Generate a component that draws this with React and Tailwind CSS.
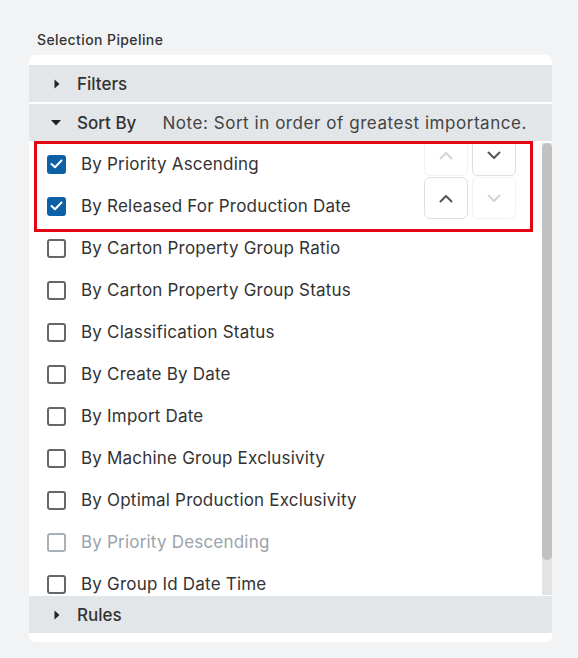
import React from "react";

const items = [
  { label: "By Priority Ascending", checked: true },
  { label: "By Released For Production Date", checked: true },
  { label: "By Carton Property Group Ratio" },
  { label: "By Carton Property Group Status" },
  { label: "By Classification Status" },
  { label: "By Create By Date" },
  { label: "By Import Date" },
  { label: "By Machine Group Exclusivity" },
  { label: "By Optimal Production Exclusivity" },
  { label: "By Priority Descending", disabled: true },
  { label: "By Group Id Date Time" },
];

const Caret = ({ open }) =>
  open ? (
    <svg width="10" height="6" viewBox="0 0 10 6" className="mr-[16px] ml-[22px]">
      <path d="M0 0 L10 0 L5 5.5 Z" fill="#222" />
    </svg>
  ) : (
    <svg width="6" height="10" viewBox="0 0 6 10" className="mr-[17px] ml-[25px]">
      <path d="M0.5 0.5 L5.5 5 L0.5 9.5 Z" fill="#222" />
    </svg>
  );

const Chevron = ({ up, active }) => (
  <svg width="14" height="9" viewBox="0 0 14 9">
    <path
      d={up ? "M1.5 7.5 L7 2 L12.5 7.5" : "M1.5 1.5 L7 7 L12.5 1.5"}
      fill="none"
      stroke={active ? "#555" : "#d4d4d4"}
      strokeWidth="2"
      strokeLinecap="round"
      strokeLinejoin="round"
    />
  </svg>
);

const ArrowButton = ({ up, active }) => (
  <div
    className={
      "w-[44px] h-[42px] rounded-[6px] border flex items-center justify-center bg-white " +
      (active ? "border-[#dcdfe3]" : "border-[#f1f2f3]")
    }
  >
    <Chevron up={up} active={active} />
  </div>
);

const Checkbox = ({ checked, disabled }) =>
  checked ? (
    <div className="w-[19px] h-[19px] shrink-0 rounded-[3px] bg-[#0d5fa6] flex items-center justify-center">
      <svg width="13" height="10" viewBox="0 0 13 10">
        <path d="M1.5 5 L5 8.3 L11.5 1.5" fill="none" stroke="#fff" strokeWidth="2" strokeLinecap="round" strokeLinejoin="round" />
      </svg>
    </div>
  ) : (
    <div
      className={
        "w-[19px] h-[19px] shrink-0 rounded-[3px] border-2 " +
        (disabled ? "border-[#a8b0b8]" : "border-[#666]")
      }
    />
  );

export default function App() {
  return (
    <div
      className="w-[578px] h-[658px] bg-[#f2f3f5] pt-[31px] pl-[29px]"
      style={{ fontFamily: "Inter, 'Noto Sans', sans-serif" }}
    >
      <div className="text-[14px] tracking-[0.4px] font-medium text-[#333] ml-[8px] leading-[18px]">
        Selection Pipeline
      </div>
      <div className="mt-[6px] w-[523px] bg-white rounded-[6px] pt-[10px] pb-[9px]">
        <div className="h-[37px] bg-[#e3e6e9] flex items-center">
          <Caret />
          <span className="text-[17px] font-medium text-[#333] pt-[2px]">Filters</span>
        </div>
        <div className="h-[37px] bg-[#e3e6e9] flex items-center mt-[2px] whitespace-nowrap">
          <Caret open />
          <span className="text-[17px] font-medium text-[#333] pt-[2px]">Sort By</span>
          <span className="text-[17px] tracking-[0.55px] text-[#444] ml-[26px] pt-[2px]">
            Note: Sort in order of greatest importance.
          </span>
        </div>
        <div className="relative h-[454px] overflow-hidden">
          <div className="pt-[2px]">
            {items.map((it) => (
              <div key={it.label} className="h-[42px] flex items-center pl-[18px] whitespace-nowrap">
                <Checkbox checked={it.checked} disabled={it.disabled} />
                <span
                  className={
                    "ml-[15px] text-[17px] tracking-[0.2px] pt-[2px] " +
                    (it.disabled ? "text-[#9aa3ab]" : "text-[#333]")
                  }
                >
                  {it.label}
                </span>
              </div>
            ))}
          </div>
          <div className="absolute left-[395px] top-[-7px] grid grid-cols-2 gap-x-[4px] gap-y-[1px]">
            <ArrowButton up />
            <ArrowButton active />
            <ArrowButton up active />
            <ArrowButton />
          </div>
          <div className="absolute left-[5px] top-0 w-[499px] h-[91px] border-[3px] border-[#e30613]" />
          <div className="absolute right-0 top-[2px] w-[10px] h-[452px] bg-[#e3e3e3]">
            <div className="h-[417px] bg-[#c1c1c1] rounded-t-[5px] rounded-b-[5px]" />
          </div>
        </div>
        <div className="h-[37px] bg-[#e3e6e9] flex items-center mt-[1px]">
          <Caret />
          <span className="text-[17px] font-medium text-[#333] pt-[2px]">Rules</span>
        </div>
      </div>
    </div>
  );
}
